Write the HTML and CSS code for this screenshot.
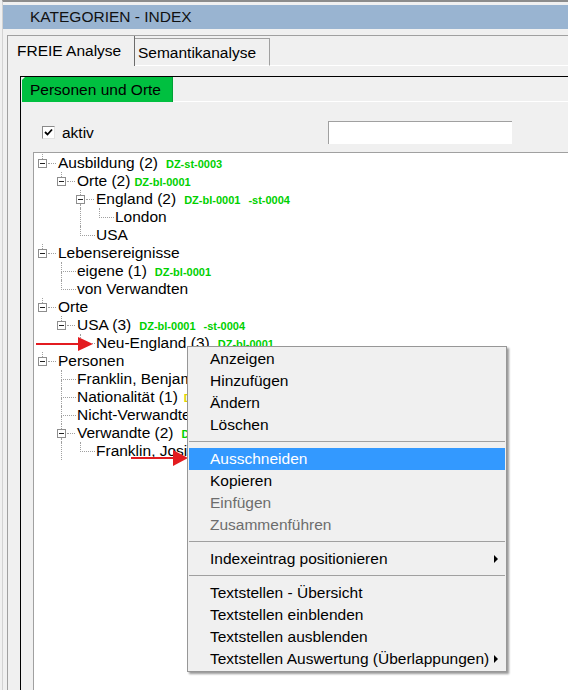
FILE: index.html
```html
<!DOCTYPE html>
<html lang="de">
<head>
<meta charset="utf-8">
<title>Kategorien - Index</title>
<link rel="stylesheet" href="styles.css">
</head>
<body>
<div class="window">
  <div class="titlebar">KATEGORIEN - INDEX</div>
  <div class="frame">
    <div class="tabs">
      <div class="tab active">FREIE Analyse</div>
      <div class="tab">Semantikanalyse</div>
      <div class="tab-fill"></div>
    </div>
    <div class="panel">
      <div class="inner">
        <div class="gtabs">
          <div class="gtab">Personen und Orte</div>
          <div class="gtab-fill"></div>
        </div>
        <div class="opts">
          <div class="chk">
            <span class="cb"><svg width="9" height="9" viewBox="0 0 9 9"><polyline points="1,4 3.5,6.5 8,1.5" fill="none" stroke="#000" stroke-width="1.8"/></svg></span>
            <span>aktiv</span>
          </div>
          <div class="field"></div>
        </div>
        <div class="tree">
          <div class="row"><div class="c"><i class="s"></i><span class="br"><span class="bx"></span><i class="h"></i></span></div><span class="lbl">Ausbildung (2)<span class="code">DZ-st-0003</span></span></div>
          <div class="row"><div class="g"></div><div class="c"><i class="s"></i><span class="br"><span class="bx"></span><i class="h"></i></span></div><span class="lbl">Orte (2)<span class="code tight">DZ-bl-0001</span></span></div>
          <div class="row"><div class="g"></div><div class="g"></div><div class="c"><i class="s"></i><span class="br"><span class="bx"></span><i class="h"></i></span><i class="b2"></i></div><span class="lbl">England (2)<span class="code">DZ-bl-0001</span><span class="code">-st-0004</span></span></div>
          <div class="row"><div class="g"></div><div class="g"></div><div class="g v"></div><div class="c"><i class="t"></i></div><span class="lbl">London</span></div>
          <div class="row"><div class="g"></div><div class="g"></div><div class="c"><i class="t"></i></div><span class="lbl">USA</span></div>
          <div class="row"><div class="c"><i class="s"></i><span class="br"><span class="bx"></span><i class="h"></i></span></div><span class="lbl">Lebensereignisse</span></div>
          <div class="row"><div class="g"></div><div class="c"><i class="t"></i><i class="b"></i></div><span class="lbl">eigene (1)<span class="code">DZ-bl-0001</span></span></div>
          <div class="row"><div class="g"></div><div class="c"><i class="t"></i></div><span class="lbl">von Verwandten</span></div>
          <div class="row"><div class="c"><i class="s"></i><span class="br"><span class="bx"></span><i class="h"></i></span></div><span class="lbl">Orte</span></div>
          <div class="row"><div class="g"></div><div class="c"><i class="s"></i><span class="br"><span class="bx"></span><i class="h"></i></span></div><span class="lbl">USA (3)<span class="code">DZ-bl-0001</span><span class="code">-st-0004</span></span></div>
          <div class="row"><div class="g"></div><div class="g"></div><div class="c"><i class="t"></i></div><span class="lbl">Neu-England (3)<span class="code">DZ-bl-0001</span></span></div>
          <div class="row"><div class="c"><i class="s"></i><span class="br"><span class="bx"></span><i class="h"></i></span></div><span class="lbl">Personen</span></div>
          <div class="row"><div class="g"></div><div class="c"><i class="t"></i><i class="b"></i></div><span class="lbl">Franklin, Benjamin</span></div>
          <div class="row"><div class="g"></div><div class="c"><i class="t"></i><i class="b"></i></div><span class="lbl">Nationalität (1)<span class="code yellow">DZ-bl-0001</span></span></div>
          <div class="row"><div class="g"></div><div class="c"><i class="t"></i><i class="b"></i></div><span class="lbl">Nicht-Verwandte</span></div>
          <div class="row"><div class="g"></div><div class="c"><i class="s"></i><span class="br"><span class="bx"></span><i class="h"></i></span><i class="b2"></i></div><span class="lbl">Verwandte (2)<span class="code">DZ-bl-0001</span></span></div>
          <div class="row"><div class="g"></div><div class="g v"></div><div class="c"><i class="t"></i></div><span class="lbl">Franklin, Josiah</span></div>
        </div>
      </div>
    </div>
  </div>
</div>

<svg class="arrow a1" width="58" height="16" viewBox="0 0 58 16"><line x1="0" y1="8" x2="44" y2="8" stroke="#e31b20" stroke-width="2"/><polygon points="42,1 57,8 42,15" fill="#e31b20"/></svg>
<svg class="arrow a2" width="58" height="18" viewBox="0 0 58 18"><line x1="0" y1="9" x2="44" y2="9" stroke="#e31b20" stroke-width="2"/><polygon points="42,1 57,9 42,17" fill="#e31b20"/></svg>

<div class="menu">
  <div class="mi">Anzeigen</div>
  <div class="mi">Hinzufügen</div>
  <div class="mi">Ändern</div>
  <div class="mi">Löschen</div>
  <div class="sep"></div>
  <div class="mi sel">Ausschneiden</div>
  <div class="mi">Kopieren</div>
  <div class="mi dis">Einfügen</div>
  <div class="mi dis">Zusammenführen</div>
  <div class="sep"></div>
  <div class="mi">Indexeintrag positionieren<span class="sub"></span></div>
  <div class="sep"></div>
  <div class="mi">Textstellen - Übersicht</div>
  <div class="mi">Textstellen einblenden</div>
  <div class="mi">Textstellen ausblenden</div>
  <div class="mi">Textstellen Auswertung (Überlappungen)<span class="sub"></span></div>
</div>
</body>
</html>
```
FILE: styles.css
```css
* { box-sizing: border-box; }
html { overflow: hidden; }
html, body { margin: 0; padding: 0; }
body {
  position: relative;
  width: 568px;
  height: 690px;
  overflow: hidden;
  background: #f0f0f0;
  font-family: "Liberation Sans", Arial, sans-serif;
  font-size: 15.5px;
  color: #000;
}
.window {
  height: 690px;
  margin-left: 2px;
  border-top: 2px solid #8c8c8c;
  border-left: 1px solid #d2d2d2;
  padding-top: 3px;
  display: flex;
  flex-direction: column;
}
.titlebar {
  flex: none;
  height: 24px;
  line-height: 24px;
  background: #99b4d1;
  padding-left: 27px;
  color: #111;
  white-space: nowrap;
}
.frame {
  flex: 1;
  min-height: 0;
  margin: 6px 0 0 4px;
  border-top: 1px solid #a0a0a0;
  border-left: 1px solid #a0a0a0;
  display: flex;
  flex-direction: column;
}
.tabs {
  flex: none;
  display: flex;
  align-items: flex-end;
  height: 30px;
}
.tab {
  flex: none;
  width: 135px;
  height: 28px;
  padding: 5px 0 0 3px;
  line-height: 18px;
  border-top: 1px solid #a0a0a0;
  border-right: 1px solid #a0a0a0;
  border-bottom: 1px solid #fff;
  white-space: nowrap;
}
.tab.active {
  width: 127px;
  height: 30px;
  padding: 6px 0 0 9px;
  border-top: 0;
  border-bottom: 0;
  border-right-color: #6b6b6b;
}
.tab-fill {
  flex: 1;
  height: 30px;
  border-bottom: 1px solid #fff;
}
.panel {
  flex: 1;
  min-height: 0;
  padding: 10px 0 0 12px;
  display: flex;
  flex-direction: column;
}
.inner {
  flex: 1;
  min-height: 0;
  border-top: 1px solid #000;
  border-left: 1px solid #000;
  display: flex;
  flex-direction: column;
}
.gtabs {
  flex: none;
  display: flex;
  height: 25px;
  padding-left: 1px;
}
.gtab {
  flex: none;
  width: 151px;
  height: 25px;
  line-height: 25px;
  padding-left: 8px;
  background: #00c040;
  border-right: 1px solid #00a035;
  clip-path: polygon(3px 0, 100% 0, 100% 100%, 0 100%, 0 3px);
  white-space: nowrap;
}
.gtab-fill {
  flex: 1;
  border-bottom: 1px solid #fff;
}
.opts {
  flex: none;
  display: flex;
  align-items: center;
  height: 23px;
  margin-top: 19px;
  padding-left: 21px;
}
.chk {
  flex: none;
  width: 286px;
  display: flex;
  align-items: center;
}
.cb {
  width: 13px;
  height: 13px;
  margin-right: 7px;
  background: #fff;
  border: 1px solid;
  border-color: #8a8a8a #e2e2e2 #e2e2e2 #8a8a8a;
  display: flex;
  align-items: center;
  justify-content: center;
}
.cb svg { display: block; }
.field {
  flex: none;
  width: 184px;
  height: 23px;
  background: #fff;
  border-top: 1px solid #a0a0a0;
  border-left: 1px solid #a0a0a0;
}
.tree {
  flex: 1;
  min-height: 0;
  margin: 8px 0 0 12px;
  padding-top: 1px;
  background: #fff;
  border-top: 1px solid #a0a0a0;
  border-left: 1px solid #a0a0a0;
}
.row {
  display: flex;
  height: 18px;
}
.g { flex: none; width: 19px; }
.g.v {
  width: 11px;
  margin-left: 8px;
  border-left: 1px dotted #a0a0a0;
}
.c {
  flex: none;
  width: 23px;
  display: flex;
  flex-direction: column;
}
.c i { display: block; flex: none; }
.c .t {
  height: 10px;
  width: 15px;
  margin-left: 8px;
  border-left: 1px dotted #a0a0a0;
  border-bottom: 1px dotted #a0a0a0;
}
.c .b {
  height: 8px;
  margin-left: 8px;
  border-left: 1px dotted #a0a0a0;
}
.c .s {
  height: 5px;
  margin-left: 8px;
  border-left: 1px dotted #a0a0a0;
}
.c .b2 {
  height: 4px;
  margin-left: 8px;
  border-left: 1px dotted #a0a0a0;
}
.c .br {
  height: 9px;
  display: flex;
  align-items: center;
}
.bx {
  flex: none;
  margin-left: 4px;
  width: 9px;
  height: 9px;
  border: 1px solid #8e8e8e;
  background: #fff;
  display: flex;
  align-items: center;
  justify-content: center;
}
.bx::before {
  content: "";
  width: 5px;
  height: 1px;
  background: #222;
}
.c .h {
  width: 8px;
  height: 0;
  margin-left: 1px;
  border-top: 1px dotted #a0a0a0;
}
.lbl {
  margin-left: 1px;
  line-height: 18px;
  white-space: nowrap;
}
.code {
  margin-left: 8px;
  font-size: 11px;
  font-weight: bold;
  color: #00d000;
}
.code.tight { margin-left: 4px; }
.code.yellow { margin-left: 6px; color: #e0d400; }
.arrow {
  position: absolute;
  display: block;
}
.a1 { left: 36px; top: 336px; }
.a2 { left: 131px; top: 449px; }
.menu {
  position: absolute;
  left: 187px;
  top: 346px;
  width: 320px;
  padding: 1px;
  background: #f0f0f0;
  border: 1px solid #979797;
  box-shadow: 2px 2px 2px rgba(0, 0, 0, 0.4);
}
.mi {
  height: 22px;
  display: flex;
  align-items: center;
  padding-left: 21px;
  white-space: nowrap;
}
.mi.sel { background: #3399ff; color: #fff; }
.mi.dis { color: #6d6d6d; }
.sep {
  height: 12px;
  padding-top: 5px;
}
.sep::before {
  content: "";
  display: block;
  height: 1px;
  background: #a0a0a0;
}
.sub {
  margin-left: auto;
  margin-right: 7px;
  width: 0;
  height: 0;
  border-left: 4px solid #000;
  border-top: 4px solid transparent;
  border-bottom: 4px solid transparent;
}
```
